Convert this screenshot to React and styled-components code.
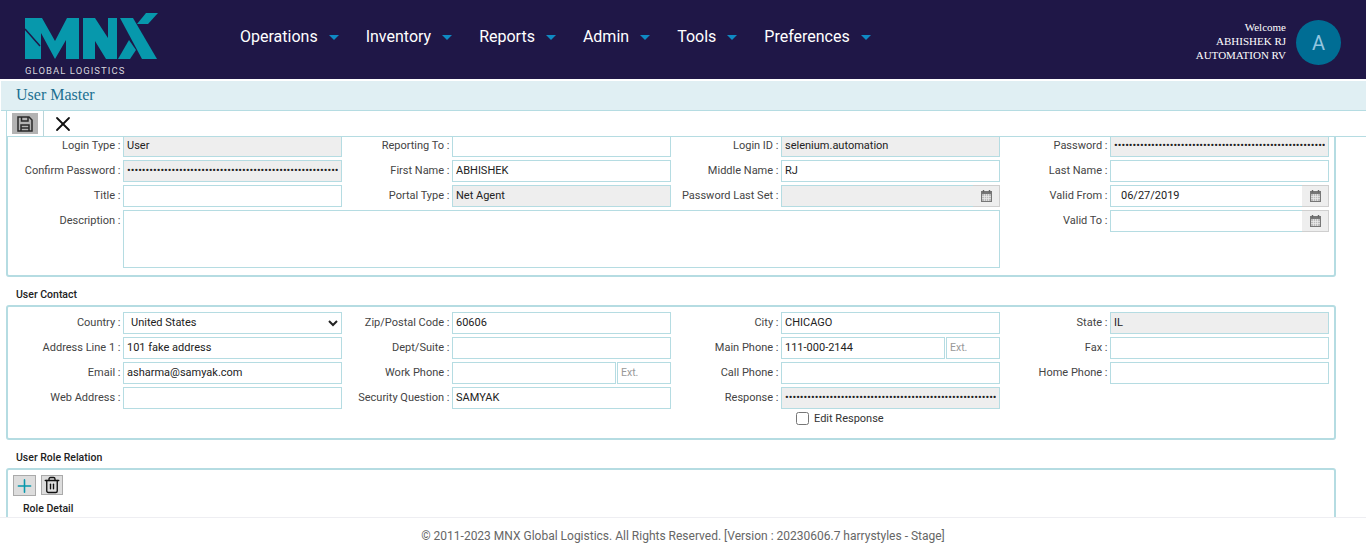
import React from "react";
import styled, { createGlobalStyle } from "styled-components";
import { X, Plus, Trash2 } from "lucide-react";

const TEAL_LINE = "#b5dce2";
const DOTS = "•".repeat(64);

const GlobalStyle = createGlobalStyle`
  html, body { margin: 0; padding: 0; background: #fff; }
  body { font-family: "Roboto", "Liberation Sans", sans-serif; overflow: hidden; }
  * { box-sizing: border-box; }
`;

const Page = styled.div`
  height: 555px;
  display: flex;
  flex-direction: column;
  overflow: hidden;
`;

const Header = styled.header`
  height: 79px;
  flex: none;
  background: #1f1747;
  display: flex;
  align-items: stretch;
  padding-right: 25px;
`;

const Brand = styled.div`
  width: 240px;
  flex: none;
  padding: 13px 0 0 24px;
  display: flex;
  flex-direction: column;
`;

const BrandText = styled.span`
  font-size: 9.5px;
  letter-spacing: 1.05px;
  line-height: 11px;
  color: #d5d5dc;
  margin: 5px 0 0 1px;
  white-space: nowrap;
`;

const Nav = styled.nav`
  display: flex;
  align-items: center;
  gap: 27px;
  flex: 1;
  padding-bottom: 6px;
`;

const NavItem = styled.a`
  display: flex;
  align-items: center;
  gap: 11px;
  font-size: 16px;
  color: #fff;
  white-space: nowrap;

  &::after {
    content: "";
    margin-top: 2px;
    border-style: solid;
    border-width: 5px 5px 0;
    border-color: #0f8ac4 transparent transparent;
  }
`;

const UserBox = styled.div`
  display: flex;
  align-items: center;
  gap: 10px;
`;

const UserText = styled.div`
  font-family: "Liberation Serif", serif;
  font-size: 11px;
  line-height: 14px;
  color: #fff;
  text-align: right;
  margin-top: 3px;
`;

const Avatar = styled.div`
  width: 45px;
  height: 45px;
  border-radius: 50%;
  background: #006d94;
  color: #93c6e0;
  font-size: 20px;
  display: flex;
  align-items: center;
  justify-content: center;
  margin-top: 6px;
`;

const TitleBar = styled.div`
  flex: none;
  height: 30px;
  margin: 2px 0 0 1px;
  background: #e0eff3;
  border-bottom: 1px solid ${TEAL_LINE};
  padding-left: 15px;
  font-family: "Liberation Serif", serif;
  font-size: 16px;
  line-height: 28px;
  color: #1c6f91;
`;

const Toolbar = styled.div`
  flex: none;
  height: 26px;
  margin-left: 6px;
  border-left: 1px solid ${TEAL_LINE};
  border-bottom: 1px solid ${TEAL_LINE};
  display: flex;
  align-items: stretch;
`;

const SaveSlot = styled.div`
  width: 37px;
  padding: 2px 0 0 5px;
  border-right: 1px solid #b9d5da;
`;

const SaveButton = styled.button`
  width: 26px;
  height: 21px;
  padding: 0;
  border: 0;
  background: #b3b3b3;
  display: flex;
  align-items: center;
  justify-content: center;
`;

const CloseButton = styled.button`
  padding: 0 0 0 7px;
  border: 0;
  background: none;
  color: #111;
  display: flex;
  align-items: center;
`;

const Scroller = styled.main`
  flex: 1;
  min-height: 0;
  overflow: hidden;
  padding-left: 6px;
`;

const Panel = styled.section`
  width: 1330px;
  border: 2px solid ${TEAL_LINE};
  border-radius: 3px;
  padding: 5px 5px ${(p) => p.$bottom || 7}px;
  margin-top: ${(p) => p.$top || 0}px;
`;

const SectionTitle = styled.h3`
  margin: 0;
  height: 28px;
  padding: 6px 0 0 10px;
  display: flex;
  align-items: center;
  font-size: 10.5px;
  font-weight: 500;
  color: #222;
`;

const FormGrid = styled.div`
  display: grid;
  grid-template-columns: repeat(4, 329px);
  row-gap: 3px;
`;

const FieldRow = styled.div`
  display: grid;
  grid-template-columns: ${(p) => (p.$wide ? "107.5px 877px" : "107.5px 219px")};
  column-gap: 2.5px;
  grid-column: ${(p) => (p.$wide ? "span 3" : "auto")};
`;

const Label = styled.label`
  font-size: 11px;
  line-height: 22px;
  color: #444;
  text-align: right;
  white-space: nowrap;
`;

const TextInput = styled.input`
  width: 100%;
  min-width: 0;
  height: 22px;
  border: 1.5px solid ${TEAL_LINE};
  border-radius: 0;
  outline: 0;
  padding: 0 3px 2px;
  font: 11px "Roboto", sans-serif;
  color: #222;
  background: ${(p) => (p.$locked ? "#eeeeee" : "#fff")};

  &::placeholder { color: #999; }
`;

const TextArea = styled.textarea`
  display: block;
  width: 100%;
  height: 58px;
  border: 1.5px solid ${TEAL_LINE};
  outline: 0;
  resize: none;
  background: #fff;
`;

const Select = styled.select`
  width: 100%;
  height: 22px;
  border: 1.5px solid ${TEAL_LINE};
  border-radius: 0;
  outline: 0;
  padding: 0 0 2px 3px;
  font: 11px "Roboto", sans-serif;
  color: #222;
  background: #fff;
`;

const InputGroup = styled.div`
  display: flex;
  height: 22px;
`;

const ExtInput = styled(TextInput)`
  width: 54px;
  flex: none;
  margin-left: 1px;
  font-size: 10.5px;
`;

const CalendarAddon = styled.span`
  width: 27px;
  flex: none;
  background: #eeeeee;
  border: 1px solid #cfcfcf;
  border-left: 0;
  display: flex;
  align-items: center;
  justify-content: center;
`;

const DateInput = styled(TextInput)`
  flex: 1;
  padding-left: ${(p) => (p.$locked ? 3 : 10)}px;
  border-right: 0;
`;

const CheckRow = styled.label`
  grid-column: 3;
  margin-left: 110px;
  padding-left: 15px;
  height: 13px;
  display: flex;
  align-items: center;
  gap: 5px;
  font-size: 11px;
  color: #333;
  white-space: nowrap;
`;

const Checkbox = styled.input`
  margin: 0;
  width: 13px;
  height: 13px;
`;

const RoleActions = styled.div`
  display: flex;
  align-items: flex-start;
  gap: 5px;
`;

const IconButton = styled.button`
  width: ${(p) => p.$w}px;
  height: ${(p) => p.$h}px;
  padding: 0;
  border: 1px solid #aaa;
  background: #dddddd;
  color: ${(p) => p.$color};
  display: flex;
  align-items: center;
  justify-content: center;
`;

const RoleTitle = styled.h4`
  margin: 6px 0 0 10px;
  font-size: 10.5px;
  font-weight: 500;
  line-height: 13px;
  color: #222;
`;

const Footer = styled.footer`
  flex: none;
  height: 38px;
  background: #fff;
  border-top: 1px solid #eeeef2;
  padding-top: 10px;
  text-align: center;
  font-size: 12px;
  line-height: 16px;
  color: #666;
`;

const CalendarIcon = () => (
  <svg width="11" height="12" viewBox="0 0 11 12" aria-hidden="true">
    <rect x="0.5" y="1.5" width="10" height="10" fill="#bbb" stroke="#777" />
    <rect x="0" y="1" width="11" height="3" fill="#777" />
    <path d="M2.5 0v2.5M8.5 0v2.5" stroke="#666" strokeWidth="1.4" />
    <path d="M3.5 4v7M5.5 4v7M7.5 4v7M1 6.5h9M1 8.5h9" stroke="#eee" strokeWidth="0.7" />
  </svg>
);

const SaveIcon = () => (
  <svg width="16" height="16" viewBox="0 0 16 16" fill="none" stroke="#2a2a2a" strokeWidth="1.5" aria-hidden="true">
    <path d="M1 1h11l3 3v11H1z" />
    <path d="M4.5 1v4h6.5V1" />
    <path d="M4 15V9h8v6M4 12h8" />
  </svg>
);

const Logo = () => (
  <svg width="136" height="47" viewBox="24 13 136 47" aria-label="MNX">
    <g fill="#0798ac">
      <path d="M25 18H42L55 41L67 18H79V59H66V40L55 59L41 33V59H25z" />
      <path d="M83 18H95L108 38V18H117V59H106L95 41V59H83z" />
      <path d="M120 18H133L157 59H142z" />
      <path d="M129 40L136 50L130 59H118z" />
      <path d="M146 13H158L148 24H137z" />
    </g>
    <path d="M25 29L40 46" stroke="#1f1747" strokeWidth="1.5" />
  </svg>
);

const navItems = ["Operations", "Inventory", "Reports", "Admin", "Tools", "Preferences"];

const Field = ({ label, value, locked, type = "text" }) => (
  <FieldRow>
    <Label>{label} :</Label>
    <TextInput type={type} defaultValue={value} readOnly $locked={locked} />
  </FieldRow>
);

const DateField = ({ label, value, locked }) => (
  <FieldRow>
    <Label>{label} :</Label>
    <InputGroup>
      <DateInput defaultValue={value} readOnly $locked={locked} />
      <CalendarAddon><CalendarIcon /></CalendarAddon>
    </InputGroup>
  </FieldRow>
);

const PhoneField = ({ label, value }) => (
  <FieldRow>
    <Label>{label} :</Label>
    <InputGroup>
      <TextInput defaultValue={value} readOnly />
      <ExtInput placeholder="Ext." readOnly />
    </InputGroup>
  </FieldRow>
);

export default function App() {
  return (
    <Page>
      <GlobalStyle />
      <Header>
        <Brand>
          <Logo />
          <BrandText>GLOBAL LOGISTICS</BrandText>
        </Brand>
        <Nav>
          {navItems.map((item) => (
            <NavItem key={item}>{item}</NavItem>
          ))}
        </Nav>
        <UserBox>
          <UserText>
            Welcome<br />ABHISHEK RJ<br />AUTOMATION RV
          </UserText>
          <Avatar>A</Avatar>
        </UserBox>
      </Header>

      <TitleBar>User Master</TitleBar>
      <Toolbar>
        <SaveSlot>
          <SaveButton aria-label="Save"><SaveIcon /></SaveButton>
        </SaveSlot>
        <CloseButton aria-label="Close"><X size={24} strokeWidth={1.8} /></CloseButton>
      </Toolbar>

      <Scroller>
        <Panel $top={-9}>
          <FormGrid>
            <Field label="Login Type" value="User" locked />
            <Field label="Reporting To" />
            <Field label="Login ID" value="selenium.automation" locked />
            <Field label="Password" value={DOTS} type="password" locked />

            <Field label="Confirm Password" value={DOTS} type="password" locked />
            <Field label="First Name" value="ABHISHEK" />
            <Field label="Middle Name" value="RJ" />
            <Field label="Last Name" />

            <Field label="Title" />
            <Field label="Portal Type" value="Net Agent" locked />
            <DateField label="Password Last Set" locked />
            <DateField label="Valid From" value="06/27/2019" />

            <FieldRow $wide>
              <Label>Description :</Label>
              <TextArea readOnly />
            </FieldRow>
            <DateField label="Valid To" />
          </FormGrid>
        </Panel>

        <SectionTitle>User Contact</SectionTitle>
        <Panel $bottom={13}>
          <FormGrid>
            <FieldRow>
              <Label>Country :</Label>
              <Select defaultValue="United States">
                <option>United States</option>
              </Select>
            </FieldRow>
            <Field label="Zip/Postal Code" value="60606" />
            <Field label="City" value="CHICAGO" />
            <Field label="State" value="IL" locked />

            <Field label="Address Line 1" value="101 fake address" />
            <Field label="Dept/Suite" />
            <PhoneField label="Main Phone" value="111-000-2144" />
            <Field label="Fax" />

            <Field label="Email" value="asharma@samyak.com" />
            <PhoneField label="Work Phone" />
            <Field label="Call Phone" />
            <Field label="Home Phone" />

            <Field label="Web Address" />
            <Field label="Security Question" value="SAMYAK" />
            <Field label="Response" value={DOTS} type="password" locked />
            <span />

            <CheckRow>
              <Checkbox type="checkbox" />
              Edit Response
            </CheckRow>
          </FormGrid>
        </Panel>

        <SectionTitle>User Role Relation</SectionTitle>
        <Panel>
          <RoleActions>
            <IconButton $w={23} $h={21} $color="#0798ac" aria-label="Add">
              <Plus size={28} strokeWidth={1.8} />
            </IconButton>
            <IconButton $w={22} $h={20} $color="#111" aria-label="Delete">
              <Trash2 size={18} strokeWidth={1.8} />
            </IconButton>
          </RoleActions>
          <RoleTitle>Role Detail</RoleTitle>
        </Panel>
      </Scroller>

      <Footer>© 2011-2023 MNX Global Logistics. All Rights Reserved. [Version : 20230606.7 harrystyles - Stage]</Footer>
    </Page>
  );
}
